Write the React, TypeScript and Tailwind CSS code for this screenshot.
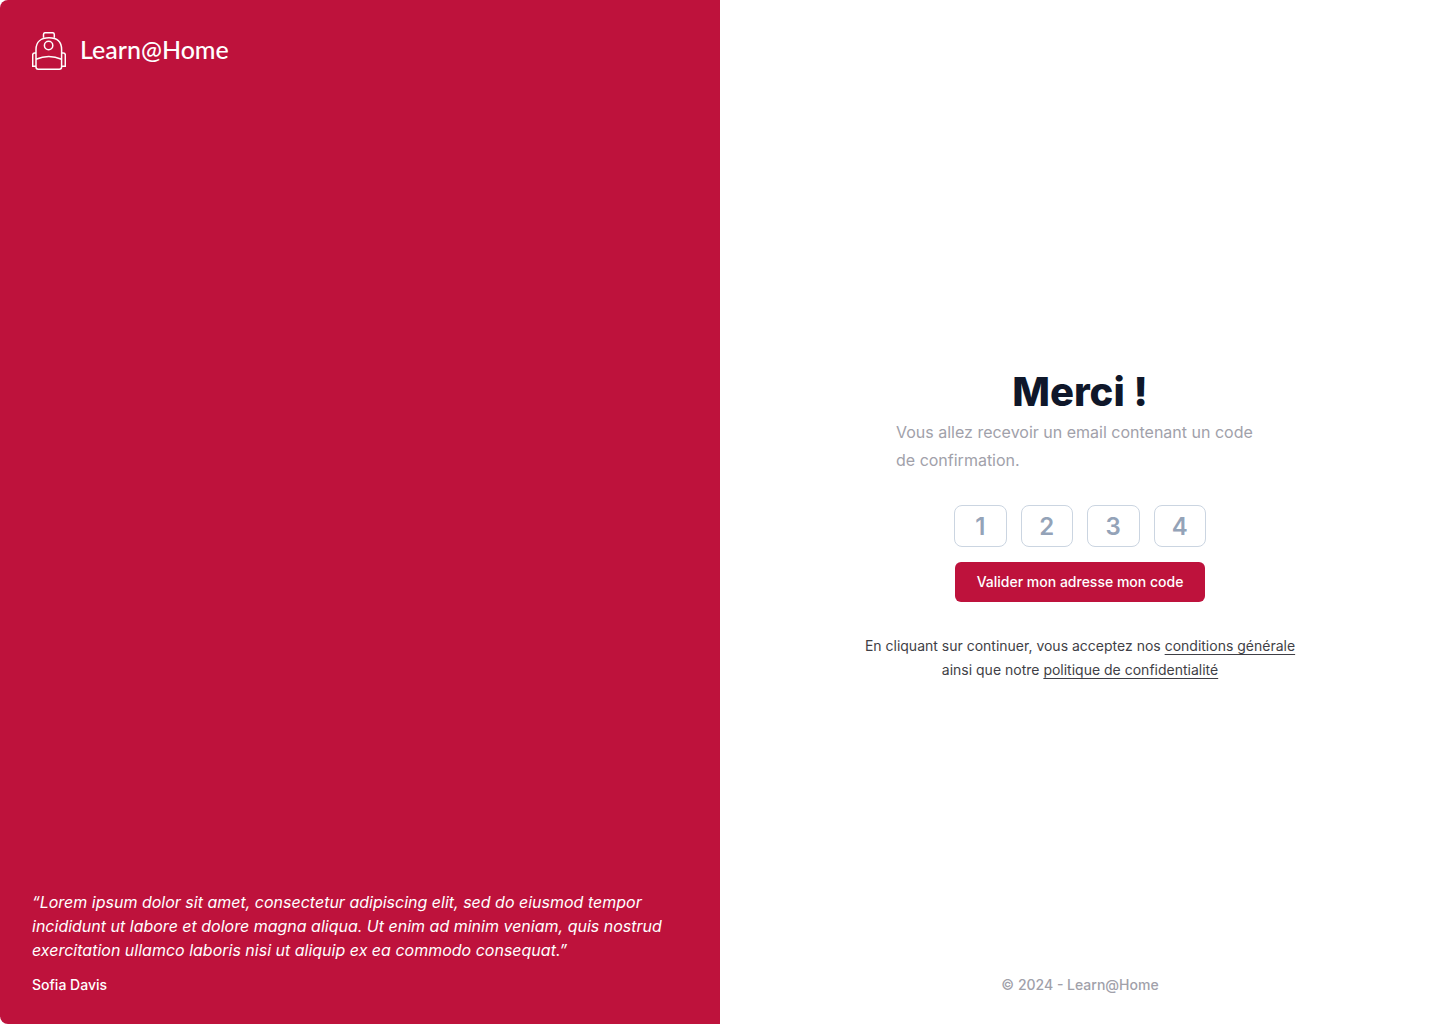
import React from "react";

function BackpackIcon() {
  return (
    <svg
      aria-hidden="true"
      className="h-[38px] w-[34px]"
      viewBox="0 0 34 38"
      fill="none"
      stroke="currentColor"
      strokeWidth="1.5"
      strokeLinejoin="round"
    >
      <path d="M11.5 5.8V2.6c0-1.1.8-1.9 1.9-1.9h7c1.1 0 1.900.8 1.900 1.900v3.200" />
      <path d="M4 35V17.500C4 9.800 9.200 5.700 17 5.700s12.600 4.100 12.600 11.800V35c0 1.300-.9 2.200-2.200 2.200H6.200C4.900 37.200 4 36.300 4 35Z" />
      <path d="M4 27.200c8-3.500 17.600-3.500 25.600 0" />
      <path d="M4 21H2.700c-1.200 0-2 .8-2 2v11.300H4M29.600 21h1.700c1.200 0 2 .8 2 2v11.300h-3.700" />
      <circle cx="16.600" cy="13.500" r="4.200" />
    </svg>
  );
}

const digits = ["1", "2", "3", "4"];

export default function App() {
  return (
    <div className="grid min-h-screen grid-cols-2 bg-white font-['Inter',sans-serif]">
      <aside className="flex flex-col justify-between rounded-l-lg bg-[#be123c] px-8 pt-8 pb-7 text-white">
        <div className="flex items-center gap-[14px]">
          <BackpackIcon />
          <span className="pb-1 font-['Lato',sans-serif] text-[25px] leading-8 font-medium">Learn@Home</span>
        </div>
        <figure>
          <blockquote className="max-w-[640px] text-base leading-6 italic">
            “Lorem ipsum dolor sit amet, consectetur adipiscing elit, sed do eiusmod tempor incididunt ut labore et
            dolore magna aliqua. Ut enim ad minim veniam, quis nostrud exercitation ullamco laboris nisi ut aliquip
            ex ea commodo consequat.”
          </blockquote>
          <figcaption className="mt-3 text-sm leading-[22px] font-medium">Sofia Davis</figcaption>
        </figure>
      </aside>

      <div className="flex flex-col items-center pb-7">
        <main className="flex flex-1 flex-col items-center justify-center pt-20">
          <h1 className="text-[40px] leading-10 font-extrabold text-[#0f172a]">Merci !</h1>
          <p className="mt-[6px] w-[368px] text-base leading-7 text-[#a1a1aa]">
            Vous allez recevoir un email contenant un code de confirmation.
          </p>
          <form className="mt-[31px] flex w-[252px] flex-col items-center" onSubmit={(e) => e.preventDefault()}>
            <div className="grid w-full grid-cols-4 gap-[14px]">
              {digits.map((digit) => (
                <input
                  key={digit}
                  aria-label={`Chiffre ${digit} du code`}
                  defaultValue={digit}
                  inputMode="numeric"
                  maxLength={1}
                  className="h-[42px] w-full min-w-0 rounded-lg border border-[#cbd5e1] text-center text-2xl font-semibold text-[#94a3b8]"
                />
              ))}
            </div>
            <button
              type="submit"
              className="mt-[15px] h-10 w-[250px] rounded-md bg-[#be123c] text-sm font-medium text-white"
            >
              Valider mon adresse mon code
            </button>
          </form>
          <p className="mt-8 w-[448px] text-center text-sm leading-6 text-[#3f3f46]">
            En cliquant sur continuer, vous acceptez nos{" "}
            <a href="#conditions" className="underline underline-offset-[3px]">
              conditions générale
            </a>{" "}
            ainsi que notre{" "}
            <a href="#confidentialite" className="underline underline-offset-[3px]">
              politique de confidentialité
            </a>
          </p>
        </main>
        <footer className="text-sm leading-[22px] font-medium text-[#a1a1aa]">© 2024 - Learn@Home</footer>
      </div>
    </div>
  );
}
